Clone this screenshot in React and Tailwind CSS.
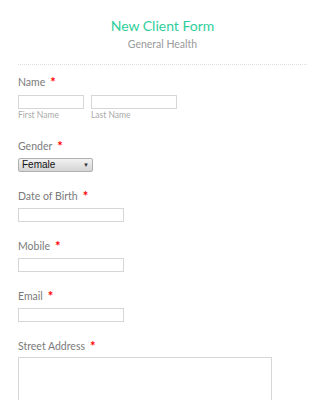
import React from 'react';

const font = { fontFamily: 'Lato, "Open Sans", sans-serif' };

function Label({ children }) {
  return (
    <div className="h-[14px] flex items-center text-[10.5px] leading-[14px] text-[#7a7a7a]" style={font}>
      <span>{children}</span>
      <span className="ml-[5px] text-[13px] text-[#ff0000] font-bold">*</span>
    </div>
  );
}

function Field({ className = '' }) {
  return <div className={`h-[14px] border border-[#d6d6d6] bg-white ${className}`} />;
}

export default function App() {
  return (
    <div className="w-[325px] h-[400px] overflow-hidden bg-white px-[18px]" style={font}>
      {/* --- HEADER --- */}
      <div className="pt-[17px] text-center">
        <h1 className="text-[14px] leading-[18px] text-[#2fcf9c]">New Client Form</h1>
        <p className="mt-[2px] text-[10.5px] leading-[14px] text-[#9a9a9a]">General Health</p>
      </div>
      <div className="mt-[13px] border-t border-dotted border-[#dedede]" />

      {/* --- NAME --- */}
      <div className="mt-[10px]">
        <Label>Name</Label>
        <div className="mt-[6px] flex gap-[7px]">
          <div>
            <Field className="w-[66px]" />
            <p className="text-[8.5px] leading-[10px] text-[#aaa] mt-[1px]">First Name</p>
          </div>
          <div>
            <Field className="w-[86px]" />
            <p className="text-[8.5px] leading-[10px] text-[#aaa] mt-[1px]">Last Name</p>
          </div>
        </div>
      </div>

      {/* --- GENDER --- */}
      <div className="mt-[19px]">
        <Label>Gender</Label>
        <div
          className="mt-[5px] w-[75px] h-[14px] flex items-center justify-between px-[3px] border border-[#b0b0b0] rounded-[2px] bg-gradient-to-b from-[#f2f2f2] to-[#d4d4d4] text-[10px] leading-[12px] text-[#111]"
          style={{ fontFamily: '"Liberation Sans", Arial, sans-serif' }}
        >
          <span>Female</span>
          <span className="text-[6px] text-[#333]">▼</span>
        </div>
      </div>

      {/* --- SINGLE FIELDS --- */}
      {['Date of Birth', 'Mobile', 'Email'].map((label) => (
        <div key={label} className="mt-[17px]">
          <Label>{label}</Label>
          <Field className="mt-[5px] w-[106px]" />
        </div>
      ))}

      {/* --- ADDRESS --- */}
      <div className="mt-[17px]">
        <Label>Street Address</Label>
        <div className="mt-[4px] w-[254px] h-[80px] border border-[#d6d6d6] bg-white" />
      </div>
    </div>
  );
}
